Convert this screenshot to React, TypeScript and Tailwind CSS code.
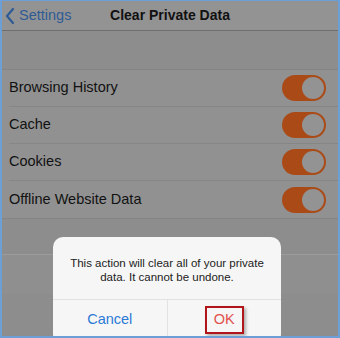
import React from "react";

const rows = ["Browsing History", "Cache", "Cookies", "Offline Website Data"];

function Toggle() {
    return (
        <div className="flex h-[26px] w-[44px] items-center justify-end rounded-full bg-[#aa4b17] p-[2px]">
            <div className="h-[22px] w-[22px] rounded-full bg-[#939393]" />
        </div>
    );
}

export default function App() {
    return (
        <div
            className="relative h-[338px] w-[340px] overflow-hidden border-x-2 border-t border-b-2 border-[#6b9fd6] bg-[#8d8d8d] text-[#111]"
            style={{ fontFamily: '"Liberation Sans", Arial, sans-serif' }}
        >
            {/* nav */}
            <div className="relative flex h-[30px] items-center border-b border-[#6f6f6f] bg-[#939393]">
                <div className="flex items-center pl-[2px] text-[#2f5b95]">
                    <svg width="12" height="18" viewBox="0 0 12 18" fill="none">
                        <path d="M9 2 L3 9 L9 16" stroke="#2f5b95" strokeWidth="2.2" strokeLinecap="round" strokeLinejoin="round" />
                    </svg>
                    <span className="ml-[3px] text-[14.5px]">Settings</span>
                </div>
                <div className="absolute left-0 right-0 text-center text-[14px] font-semibold">Clear Private Data</div>
            </div>

            <div className="h-[38px]" />

            <div className="border-y border-[#858585] bg-[#919191]">
                {rows.map((r, i) => (
                    <div key={r} className="flex h-[37px] items-center pl-[7px]">
                        <div className={"flex h-full flex-1 items-center justify-between pr-[12px] " + (i < rows.length - 1 ? "border-b border-[#868686]" : "")}>
                            <span className="text-[14.5px]">{r}</span>
                            <Toggle />
                        </div>
                    </div>
                ))}
            </div>

            <div className="h-[35px]" />
            <div className="h-[40px] border-t border-[#9c9c9c] bg-[#8f8f8f]" />

            {/* dialog */}
            <div className="absolute left-[51px] top-[236px] w-[228px] rounded-[10px] bg-[#f6f6f6]">
                <div className="px-3 pb-[15px] pt-[19px] text-center text-[11.5px] leading-[14px] text-[#222]">
                    This action will clear all of your private data. It cannot be undone.
                </div>
                <div className="flex h-[45px] border-t border-[#e2e2e2]">
                    <div className="flex flex-1 items-center justify-center border-r border-[#e2e2e2] pb-[4px] text-[14.5px] text-[#2c7ad6]">
                        Cancel
                    </div>
                    <div className="flex flex-1 items-center justify-center pb-[4px]">
                        <span className="border-2 border-[#b0151a] px-[7px] py-[1px] text-[14.5px] text-[#e2504d] shadow-[2px_2px_3px_rgba(0,0,0,0.3)]">
                            OK
                        </span>
                    </div>
                </div>
            </div>
        </div>
    );
}
